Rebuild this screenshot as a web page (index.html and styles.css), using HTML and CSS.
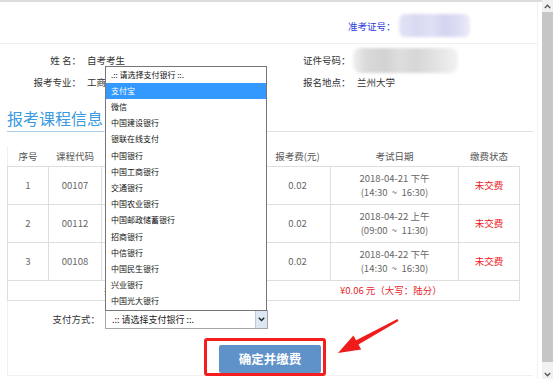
FILE: index.html
```html
<!DOCTYPE html>
<html lang="zh-CN">
<head>
<meta charset="utf-8">
<title>报考缴费</title>
<link rel="stylesheet" href="styles.css">
</head>
<body>
<div class="window">
  <div class="page">
    <div class="content">
      <div class="topbar">
        <span class="ticket-label">准考证号：</span>
        <span class="blur blur-ticket"></span>
      </div>
      <div class="info">
        <div class="info-row">
          <div class="info-left"><span class="label">姓 名：</span><span class="value">自考考生</span></div>
          <div class="info-right"><span class="label2">证件号码：</span><span class="blur blur-id"></span></div>
        </div>
        <div class="info-row">
          <div class="info-left"><span class="label">报考专业：</span><span class="value">工商企业管理</span></div>
          <div class="info-right"><span class="label2">报名地点：</span><span class="value2">兰州大学</span></div>
        </div>
      </div>
      <h2 class="section-title">报考课程信息</h2>
      <div class="panel">
        <table class="courses">
          <colgroup>
            <col class="c1"><col class="c2"><col class="c3"><col class="c4"><col class="c5"><col class="c6">
          </colgroup>
          <thead>
            <tr><th>序号</th><th>课程代码</th><th>课程名称</th><th>报考费(元)</th><th>考试日期</th><th>缴费状态</th></tr>
          </thead>
          <tbody>
            <tr class="row">
              <td>1</td><td>00107</td><td>现代管理学</td><td>0.02</td>
              <td>2018-04-21 下午<br>(14:30 &nbsp;~ &nbsp;16:30)</td><td class="unpaid">未交费</td>
            </tr>
            <tr class="row">
              <td>2</td><td>00112</td><td>组织行为学</td><td>0.02</td>
              <td>2018-04-22 上午<br>(09:00 &nbsp;~ &nbsp;11:30)</td><td class="unpaid">未交费</td>
            </tr>
            <tr class="row">
              <td>3</td><td>00108</td><td>企业经营战略</td><td>0.02</td>
              <td>2018-04-22 下午<br>(14:30 &nbsp;~ &nbsp;16:30)</td><td class="unpaid">未交费</td>
            </tr>
            <tr class="total">
              <td colspan="6"><span class="total-label">共计 3 门课程，报考费合计：</span><span class="total-amount">¥0.06 元（大写：陆分）</span></td>
            </tr>
          </tbody>
        </table>
        <div class="pay-row">
          <span class="pay-label">支付方式：</span>
          <div class="select">
            <span class="select-text">.:: 请选择支付银行 ::.</span>
            <span class="select-btn">
              <svg width="7" height="5" viewBox="0 0 7 5"><path d="M0.8 0.8 L3.5 3.6 L6.2 0.8" fill="none" stroke="#222" stroke-width="1.4"/></svg>
            </span>
            <ul class="options">
              <li>.:: 请选择支付银行 ::.</li>
              <li class="active">支付宝</li>
              <li>微信</li>
              <li>中国建设银行</li>
              <li>银联在线支付</li>
              <li>中国银行</li>
              <li>中国工商银行</li>
              <li>交通银行</li>
              <li>中国农业银行</li>
              <li>中国邮政储蓄银行</li>
              <li>招商银行</li>
              <li>中信银行</li>
              <li>中国民生银行</li>
              <li>兴业银行</li>
              <li>中国光大银行</li>
            </ul>
          </div>
        </div>
        <div class="submit-row">
          <div class="highlight"><button class="submit" type="button">确定并缴费</button></div>
        </div>
      </div>
    </div>
  </div>
  <div class="scrollbar">
    <div class="sb-up"><svg width="7" height="5" viewBox="0 0 7 5"><path d="M0.8 4 L3.5 1.2 L6.2 4" fill="none" stroke="#555" stroke-width="1.3"/></svg></div>
    <div class="sb-thumb"></div>
    <div class="sb-down"><svg width="7" height="5" viewBox="0 0 7 5"><path d="M0.8 1 L3.5 3.8 L6.2 1" fill="none" stroke="#555" stroke-width="1.3"/></svg></div>
  </div>
  <svg class="arrow" width="553" height="379" viewBox="0 0 553 379">
    <polygon points="397.5,319.1 398.5,320.9 358.5,344.6 361.2,349.4 338,353 353.4,335.4 356.1,340.2" fill="#f01c1c"/>
  </svg>
</div>
</body>
</html>
```
FILE: styles.css
```css
* {
  box-sizing: border-box;
  margin: 0;
  padding: 0;
}

html,
body {
  width: 553px;
  height: 379px;
  overflow: hidden;
  background: #fff;
}

body {
  font-family: "Noto Sans CJK SC", "Microsoft YaHei", sans-serif;
  font-size: 9.5px;
  color: #333;
}

.window {
  position: relative;
  display: flex;
  width: 553px;
  height: 379px;
}

.page {
  width: 542px;
  height: 379px;
  border-top: 2px solid #dcdcdc;
  padding-right: 4px;
}

.content {
  width: 538px;
  height: 377px;
  border-right: 1px solid #f2f2f2;
}

/* top bar */
.topbar {
  height: 42px;
  border-bottom: 1px solid #efefef;
  display: flex;
  align-items: center;
  padding-left: 348px;
  padding-top: 6px;
}

.ticket-label {
  color: #2b3cd8;
  line-height: 14px;
}

.blur {
  display: inline-block;
  border-radius: 6px;
  filter: blur(1.5px);
}

.blur-ticket {
  width: 71px;
  height: 23px;
  margin-left: 3px;
  background: linear-gradient(90deg, #e4e4f6 0%, #d8d8f2 25%, #e0e0f6 45%, #d4d4f0 65%, #dcdcf4 82%, #ececf8 100%);
}

/* info */
.info {
  margin-top: 5px;
}

.info-row {
  display: flex;
  align-items: center;
  height: 22px;
}

.info-left {
  width: 303px;
  display: flex;
  align-items: center;
}

.label {
  width: 81px;
  text-align: right;
}

.value {
  margin-left: 6px;
}

.info-right {
  display: flex;
  align-items: center;
}

.label2 {
  width: 50px;
}

.value2 {
  margin-left: 4px;
}

.blur-id {
  width: 105px;
  height: 25px;
  border-radius: 8px;
  background: linear-gradient(90deg, #f0f0f0 0%, #dadada 12%, #d2d2d2 30%, #dedede 45%, #d6d6d6 60%, #e2e2e2 78%, #f2f2f2 100%);
}

/* section title */
.section-title {
  margin-top: 15px;
  margin-left: 7px;
  width: 526px;
  font-size: 16px;
  line-height: 20px;
  font-weight: normal;
  color: #3b9ae0;
  padding-bottom: 3px;
  height: 24px;
  background:
    linear-gradient(#a6cdee, #a6cdee) no-repeat left bottom / 97px 1px,
    linear-gradient(#e2e2e2, #e2e2e2) no-repeat left bottom / 100% 1px;
}

/* panel */
.panel {
  margin-left: 7px;
  width: 526px;
  border-left: 1px solid #f0f0f0;
  border-bottom: 1px solid #f0f0f0;
  padding-bottom: 0;
}

.courses {
  margin-top: 14px;
  margin-left: -1px;
  width: 512px;
  border-collapse: collapse;
  table-layout: fixed;
}

.c1 { width: 41px; }
.c2 { width: 53px; }
.c3 { width: 163px; }
.c4 { width: 66px; }
.c5 { width: 128px; }
.c6 { width: 61px; }

.courses th {
  height: 20px;
  font-weight: normal;
  color: #555;
  padding: 0;
  line-height: 14px;
}

.courses td {
  border: 1px solid #dedede;
  text-align: center;
  color: #666;
  padding: 0;
  line-height: 14.5px;
}

.courses .row td {
  height: 38px;
}

.courses td.unpaid {
  color: #f0181c;
}

.courses .total td {
  height: 20px;
  text-align: left;
  padding-left: 96px;
  color: #e8262a;
}

.total-label {
  display: inline-block;
  width: 236px;
}

/* payment select */
.pay-row {
  display: flex;
  align-items: center;
  margin-top: 9px;
  height: 19px;
}

.pay-label {
  width: 92px;
  text-align: right;
}

.select {
  position: relative;
  margin-left: 5px;
  width: 163px;
  height: 19px;
  border: 1px solid #a6a6a6;
  background: #fff;
  display: flex;
  align-items: center;
}

.select-text {
  flex: 1;
  padding-left: 6px;
  font-size: 9px;
  color: #222;
}

.select-btn {
  width: 12px;
  height: 100%;
  background: #dde7f3;
  border-left: 1px solid #bccbdd;
  display: flex;
  align-items: center;
  justify-content: center;
}

.options {
  position: absolute;
  left: -1px;
  bottom: 100%;
  width: 162px;
  list-style: none;
  background: #fff;
  border: 1px solid #767676;
}

.options li {
  height: 16.2px;
  line-height: 16.2px;
  padding-left: 5px;
  font-size: 8px;
  color: #111;
  white-space: nowrap;
}

.options li.active {
  background: #3399ff;
  color: #fff;
}

/* submit */
.submit-row {
  margin-top: 9px;
  padding-left: 196px;
  margin-bottom: -1px;
  display: flex;
}

.highlight {
  border: 3px solid #f51e1e;
  border-radius: 3px;
  padding: 4px 2px 0 12px;
}

.submit {
  display: block;
  width: 102px;
  height: 28px;
  border: none;
  border-radius: 2px;
  background: #5f92c8;
  color: #fff;
  font-family: "Noto Sans CJK SC", "Microsoft YaHei", sans-serif;
  font-size: 12.5px;
  font-weight: bold;
}

/* scrollbar */
.scrollbar {
  width: 11px;
  height: 379px;
  background: #f1f1f1;
  display: flex;
  flex-direction: column;
}

.sb-up {
  height: 12px;
  display: flex;
  align-items: center;
  justify-content: center;
}

.sb-thumb {
  height: 350px;
  background: #c6c6c6;
}

.sb-down {
  flex: 1;
  display: flex;
  align-items: flex-end;
  justify-content: center;
  padding-bottom: 2px;
}

/* annotation arrow */
.arrow {
  position: absolute;
  left: 0;
  top: 0;
  pointer-events: none;
}
```
